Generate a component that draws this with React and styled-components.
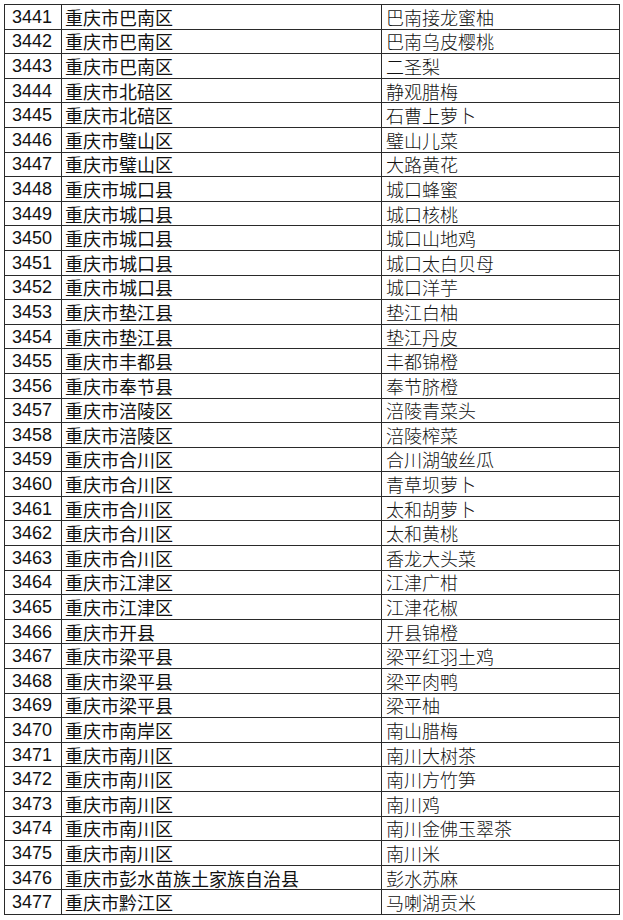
import styled, { createGlobalStyle } from 'styled-components'

const GlobalStyle = createGlobalStyle`
  html, body {
    margin: 0;
    padding: 0;
    background: #fff;
  }
`

const Page = styled.div`
  padding: 4px 0 0 4px;
`

const Table = styled.table`
  border-collapse: collapse;
  table-layout: fixed;
  width: 615px;
  border: 1.5px solid #2a2a2a;
`

const Row = styled.tr`
  height: 24.6px;
`

const Cell = styled.td`
  border: 1px solid #2a2a2a;
  padding: 0 0 0 ${(p) => p.$pad || 4}px;
  font-family: ${(p) =>
    p.$num
      ? '"Liberation Sans", Arial, sans-serif'
      : '"Noto Sans CJK SC", "Liberation Sans", sans-serif'};
  font-size: 18px;
  font-weight: ${(p) => (p.$light ? 300 : 400)};
  line-height: 22px;
  color: #111;
  white-space: nowrap;
  overflow: hidden;
  vertical-align: middle;
`

const rows = [
  ['3441', '重庆市巴南区', '巴南接龙蜜柚'],
  ['3442', '重庆市巴南区', '巴南乌皮樱桃'],
  ['3443', '重庆市巴南区', '二圣梨'],
  ['3444', '重庆市北碚区', '静观腊梅'],
  ['3445', '重庆市北碚区', '石曹上萝卜'],
  ['3446', '重庆市璧山区', '璧山儿菜'],
  ['3447', '重庆市璧山区', '大路黄花'],
  ['3448', '重庆市城口县', '城口蜂蜜'],
  ['3449', '重庆市城口县', '城口核桃'],
  ['3450', '重庆市城口县', '城口山地鸡'],
  ['3451', '重庆市城口县', '城口太白贝母'],
  ['3452', '重庆市城口县', '城口洋芋'],
  ['3453', '重庆市垫江县', '垫江白柚'],
  ['3454', '重庆市垫江县', '垫江丹皮'],
  ['3455', '重庆市丰都县', '丰都锦橙'],
  ['3456', '重庆市奉节县', '奉节脐橙'],
  ['3457', '重庆市涪陵区', '涪陵青菜头'],
  ['3458', '重庆市涪陵区', '涪陵榨菜'],
  ['3459', '重庆市合川区', '合川湖皱丝瓜'],
  ['3460', '重庆市合川区', '青草坝萝卜'],
  ['3461', '重庆市合川区', '太和胡萝卜'],
  ['3462', '重庆市合川区', '太和黄桃'],
  ['3463', '重庆市合川区', '香龙大头菜'],
  ['3464', '重庆市江津区', '江津广柑'],
  ['3465', '重庆市江津区', '江津花椒'],
  ['3466', '重庆市开县', '开县锦橙'],
  ['3467', '重庆市梁平县', '梁平红羽土鸡'],
  ['3468', '重庆市梁平县', '梁平肉鸭'],
  ['3469', '重庆市梁平县', '梁平柚'],
  ['3470', '重庆市南岸区', '南山腊梅'],
  ['3471', '重庆市南川区', '南川大树茶'],
  ['3472', '重庆市南川区', '南川方竹笋'],
  ['3473', '重庆市南川区', '南川鸡'],
  ['3474', '重庆市南川区', '南川金佛玉翠茶'],
  ['3475', '重庆市南川区', '南川米'],
  ['3476', '重庆市彭水苗族土家族自治县', '彭水苏麻'],
  ['3477', '重庆市黔江区', '马喇湖贡米']
]

export default function App() {
  return (
    <>
      <GlobalStyle />
      <Page>
        <Table>
          <colgroup>
            <col style={{ width: 57 }} />
            <col style={{ width: 320 }} />
            <col style={{ width: 238 }} />
          </colgroup>
          <tbody>
            {rows.map(([id, place, product]) => (
              <Row key={id}>
                <Cell $num $pad={7}>{id}</Cell>
                <Cell $pad={3}>{place}</Cell>
                <Cell $pad={4} $light>{product}</Cell>
              </Row>
            ))}
          </tbody>
        </Table>
      </Page>
    </>
  )
}
